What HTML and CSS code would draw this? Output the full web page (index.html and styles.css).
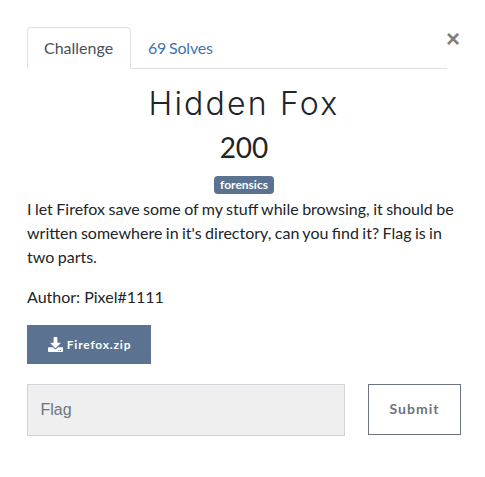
FILE: index.html
```html
<!DOCTYPE html>
<html lang="en">
<head>
<meta charset="utf-8">
<title>Hidden Fox</title>
<link rel="stylesheet" href="styles.css">
</head>
<body>
<div class="modal">
  <div class="head">
    <ul class="tabs">
      <li class="tab active">Challenge</li>
      <li class="tab link">69 Solves</li>
    </ul>
    <span class="close">×</span>
  </div>
  <h2 class="title">Hidden Fox</h2>
  <h3 class="value">200</h3>
  <div class="tags"><span class="badge">forensics</span></div>
  <p class="desc">I let Firefox save some of my stuff while browsing, it should be written somewhere in it's directory, can you find it? Flag is in two parts.</p>
  <p class="author">Author: Pixel#1111</p>
  <a class="file">
    <svg class="icon" viewBox="0 0 512 512" aria-hidden="true"><path fill="#fff" d="M216 0h80c13.300 0 24 10.700 24 24v168h87.700c17.800 0 26.700 21.500 14.100 34.100L269.700 378.300c-7.500 7.500-19.800 7.500-27.300 0L90.100 226.100c-12.600-12.600-3.700-34.100 14.100-34.100H192V24c0-13.300 10.700-24 24-24zm296 376v112c0 13.300-10.700 24-24 24H24c-13.300 0-24-10.700-24-24V376c0-13.300 10.700-24 24-24h146.700l49 49c20.100 20.100 52.500 20.100 72.600 0l49-49H488c13.300 0 24 10.700 24 24zm-124 88c0-11-9-20-20-20s-20 9-20 20 9 20 20 20 20-9 20-20zm64 0c0-11-9-20-20-20s-20 9-20 20 9 20 20 20 20-9 20-20z"/></svg>
    <span>Firefox.zip</span>
  </a>
  <form class="flag-row">
    <input class="flag" type="text" placeholder="Flag">
    <button class="submit" type="button">Submit</button>
  </form>
</div>
</body>
</html>
```
FILE: styles.css
```css
* { box-sizing: border-box; }
html, body { margin: 0; background: #fff; }
body { width: 485px; height: 477px; overflow: hidden; font-family: Lato, sans-serif; color: #212529; }
.modal { padding: 27px 24px 0 27px; }
.head { display: flex; align-items: flex-start; position: relative; margin-right: 14px; }
.tabs { flex: 1; display: flex; list-style: none; margin: 0; padding: 0; border-bottom: 1px solid #dee2e6; height: 42px; }
.tab { height: 42px; padding: 0 16px; font-size: 16px; line-height: 40px; border: 1px solid transparent; border-radius: 4px 4px 0 0; }
.tab.active { color: #495057; background: #fff; border-color: #dee2e6 #dee2e6 #fff; width: 104px; }
.tab.link { color: #3f74b0; padding-left: 16px; word-spacing: -1px; letter-spacing: -0.2px; }
.close { position: absolute; right: -13px; top: -3px; font-size: 24px; line-height: 30px; font-weight: 700; color: #7f7f7f; font-family: "Liberation Sans", sans-serif; }
.title { margin: 16px 0 0; text-align: center; font-family: Inter, sans-serif; font-weight: 300; font-size: 32px; line-height: 38px; letter-spacing: 2.2px; color: #212529; }
.value { margin: 7px 0 0; text-align: center; font-weight: 400; font-size: 28px; line-height: 34px; color: #212529; }
.tags { text-align: center; margin-top: 12px; height: 18px; display: flex; justify-content: center; }
.badge { background: #5b7290; color: #fff; border-radius: 4px; font-size: 12px; font-weight: 700; line-height: 18px; height: 18px; padding: 0 5.75px; }
.desc { margin: 3px 0 16px; font-size: 16px; line-height: 24px; color: #212529; word-spacing: -0.65px; }
.author { margin: 0 0 16px; font-size: 16px; line-height: 24px; color: #212529; }
.file { display: flex; align-items: center; justify-content: center; gap: 4px; width: 124px; height: 39px; padding-left: 1px; background: #5b7290; color: #fff; font-size: 12px; font-weight: 700; letter-spacing: 0.8px; }
.icon { width: 15px; height: 15px; }
.flag-row { display: flex; justify-content: space-between; align-items: flex-start; margin-top: 20px; width: 434px; }
.flag { width: 318px; height: 52px; padding: 0 12.500px; background: #efefef; border: 1px solid #d0d3da; border-radius: 0; font-family: "Liberation Sans", sans-serif; font-size: 16px; color: #495057; outline: 0; }
.flag::placeholder { color: #6c757d; opacity: 1; }
.submit { width: 93px; height: 51px; background: #fff; border: 1px solid #6c757d; border-radius: 0; color: #6c757d; font-family: Lato, sans-serif; font-size: 14px; font-weight: 700; letter-spacing: 1px; padding: 0 0 2px; }
```
